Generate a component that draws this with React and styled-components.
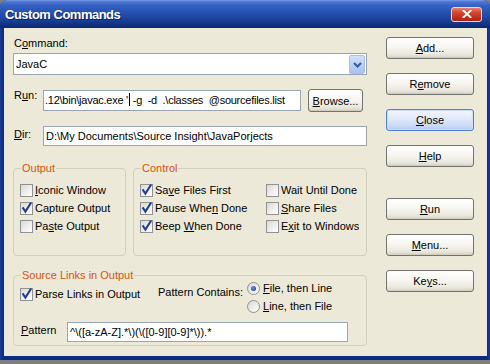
import React from "react";
import styled, { createGlobalStyle } from "styled-components";

const Global = createGlobalStyle`
  html, body { margin: 0; padding: 0; background: #7f7f7f; }
  body { font-family: "Liberation Sans", Arial, sans-serif; font-size: 11px; color: #000; }
  #root { width: 490px; height: 364px; overflow: hidden; }
`;

const Window = styled.div`
  width: 490px;
  height: 360px;
  box-sizing: border-box;
  display: flex;
  flex-direction: column;
  background: linear-gradient(to right, #1a3c9a, #0c2a80 3px, #0c2a80 calc(100% - 3px), #1a3c9a);
  border-radius: 7px 7px 0 0;
  overflow: hidden;
`;

const TitleBar = styled.div`
  height: 28px;
  flex: none;
  display: flex;
  align-items: center;
  padding-left: 5px;
  background: linear-gradient(
    to bottom,
    #7a9ce6 0%,
    #4a74d2 7%,
    #335fc0 22%,
    #2751b0 45%,
    #1b419c 70%,
    #10327f 88%,
    #0b2871 100%
  );
`;

const TitleText = styled.span`
  font-family: "Liberation Sans", Arial, sans-serif;
  font-weight: bold;
  font-size: 13px;
  letter-spacing: -0.5px;
  color: #fff;
  text-shadow: 1px 1px 0 #0a1d66;
`;

const CloseBox = styled.div`
  margin-left: auto;
  margin-right: 8px;
  width: 31px;
  height: 15px;
  box-sizing: border-box;
  border: 1px solid #f2d6d0;
  border-radius: 3px;
  background: linear-gradient(to bottom, #e8806c 0%, #d84a34 30%, #c3301c 70%, #b02412 100%);
  display: flex;
  align-items: center;
  justify-content: center;
`;

const Client = styled.div`
  flex: 1;
  margin: 0 3px 4px 4px;
  background: #ece9d8;
  display: flex;
  gap: 19px;
  padding: 9px 13px 0 9px;
`;

const LeftColumn = styled.div`
  width: 354px;
  flex: none;
  display: flex;
  flex-direction: column;
`;

const FieldLabel = styled.div`
  line-height: 13px;
  padding-left: 1px;
  white-space: nowrap;
`;

const Combo = styled.div`
  margin-top: 3px;
  height: 22px;
  box-sizing: border-box;
  border: 1px solid #98a6b4;
  background: #fff;
  display: flex;
  align-items: center;
  padding-left: 2px;
`;

const DropButton = styled.div`
  margin-left: auto;
  margin-right: 1px;
  margin-top: 1px;
  width: 16px;
  height: 19px;
  box-sizing: border-box;
  border: 1px solid #a9c1ef;
  border-radius: 2px;
  background: linear-gradient(to bottom, #d3e0fb, #bcd0f7 50%, #a9c2f3);
  display: flex;
  align-items: center;
  justify-content: center;
`;

const Row = styled.div`
  display: flex;
  align-items: flex-start;
  margin-top: ${(p) => p.$mt}px;
`;

const RowLabel = styled.div`
  width: ${(p) => p.$w}px;
  flex: none;
  line-height: 13px;
  padding-top: ${(p) => p.$pt || 0}px;
  padding-left: 1px;
  box-sizing: border-box;
  white-space: nowrap;
`;

const TextBox = styled.div`
  width: ${(p) => p.$w}px;
  height: ${(p) => p.$h}px;
  margin-top: ${(p) => p.$mt || 0}px;
  flex: none;
  box-sizing: border-box;
  border: 1px solid #98a6b4;
  background: #fff;
  padding: 0 ${(p) => p.$px || 1}px;
  line-height: ${(p) => p.$h - 2}px;
  letter-spacing: ${(p) => p.$ls || 0}px;
  white-space: pre;
  overflow: hidden;
`;

const Caret = styled.span`
  display: inline-block;
  width: 1px;
  height: 13px;
  margin-left: 1px;
  background: #000;
  vertical-align: -2px;
`;

const Button = styled.button`
  font-family: "Liberation Sans", Arial, sans-serif;
  font-size: 11px;
  color: #000;
  width: ${(p) => p.$w || 88}px;
  height: ${(p) => p.$h || 22}px;
  margin-left: ${(p) => p.$ml || 0}px;
  flex: none;
  padding: 0;
  box-sizing: border-box;
  border: 1px solid ${(p) => (p.$default ? "#4f7fd6" : "#74746f")};
  border-radius: 3px;
  background: ${(p) =>
    p.$default
      ? "linear-gradient(to bottom, #f3f6fe 0%, #e0e9fb 45%, #c9d9f7 80%, #b3c8f1 100%)"
      : "linear-gradient(to bottom, #ffffff 0%, #f7f6f1 45%, #ebe9df 80%, #d6d3c6 100%)"};
  box-shadow: ${(p) =>
    p.$default ? "inset 0 0 0 1px #cddcf8" : "inset 0 -1px 0 #d0cdbf"};
`;

const GroupsRow = styled.div`
  display: flex;
  gap: 7px;
  margin-top: 22px;
`;

const Group = styled.div`
  position: relative;
  width: ${(p) => p.$w}px;
  height: ${(p) => p.$h}px;
  margin-top: ${(p) => p.$mt || 0}px;
  flex: none;
  box-sizing: border-box;
  border: 1px solid #d0d0bf;
  border-radius: 4px;
`;

const Legend = styled.div`
  position: absolute;
  top: -7px;
  left: 7px;
  padding: 0 1px;
  line-height: 13px;
  background: #ece9d8;
  color: #d8540c;
  white-space: nowrap;
`;

const CheckGrid = styled.div`
  display: grid;
  grid-template-rows: repeat(3, 18px);
  grid-template-columns: ${(p) => p.$cols || "auto"};
  grid-auto-flow: column;
  padding: 12px 0 0 6px;
`;

const Item = styled.div`
  display: flex;
  align-items: center;
  gap: ${(p) => p.$gap || 2}px;
  height: 18px;
  white-space: nowrap;
  width: ${(p) => (p.$w ? p.$w + "px" : "auto")};
  margin-top: ${(p) => p.$mt || 0}px;
  flex: none;
`;

const Box = styled.span`
  position: relative;
  width: 13px;
  height: 13px;
  flex: none;
  box-sizing: border-box;
  border: 1px solid #8f9294;
  background: linear-gradient(135deg, #d9d8d1 0%, #eeede8 50%, #ffffff 100%);
`;

const CheckMark = styled.svg`
  position: absolute;
  left: -1px;
  top: -1px;
  overflow: visible;
`;

const Radio = styled.span`
  width: 13px;
  height: 13px;
  flex: none;
  box-sizing: border-box;
  border: 1px solid #8f9294;
  border-radius: 50%;
  background: linear-gradient(135deg, #d6d5ce 0%, #eeede8 50%, #ffffff 100%);
  display: flex;
  align-items: center;
  justify-content: center;
`;

const RadioDot = styled.span`
  width: 5px;
  height: 5px;
  border-radius: 50%;
  background: radial-gradient(circle at 40% 35%, #6d93e4 0%, #2a55b8 60%, #1c3f96 100%);
`;

const SourceTop = styled.div`
  display: flex;
  align-items: flex-start;
  padding: 3px 0 0 6px;
`;

const ContainsLabel = styled.div`
  width: 89px;
  flex: none;
  margin-top: 7px;
  line-height: 13px;
  white-space: nowrap;
`;

const RadioList = styled.div`
  display: grid;
  grid-auto-rows: 18px;
`;

const PatternRow = styled.div`
  display: flex;
  align-items: flex-start;
  margin-top: 7px;
  padding-left: 6px;
`;

const RightColumn = styled.div`
  width: 88px;
  flex: none;
  display: flex;
  flex-direction: column;
`;

const ButtonStack = styled.div`
  display: flex;
  flex-direction: column;
  gap: 14px;
  margin-top: ${(p) => p.$mt || 0}px;
`;

const U = styled.u`
  text-decoration: underline;
  text-underline-offset: 1px;
`;

function Tick() {
  return (
    <CheckMark width="13" height="13" viewBox="0 0 13 13">
      <path
        d="M3.2 6.2 L5.4 9.6 L10.6 1.4"
        fill="none"
        stroke="#1f3d96"
        strokeWidth="2.1"
        strokeLinecap="square"
      />
    </CheckMark>
  );
}

function Check({ checked, children, w, mt }) {
  return (
    <Item $w={w} $mt={mt}>
      <Box>{checked && <Tick />}</Box>
      <span>{children}</span>
    </Item>
  );
}

function RadioOption({ selected, children }) {
  return (
    <Item $gap={3}>
      <Radio>{selected && <RadioDot />}</Radio>
      <span>{children}</span>
    </Item>
  );
}

export default function App() {
  return (
    <>
      <Global />
      <Window>
        <TitleBar>
          <TitleText>Custom Commands</TitleText>
          <CloseBox>
            <svg width="10" height="8" viewBox="0 0 10 8">
              <path d="M1.5 0.8 L8.5 7.2 M8.5 0.8 L1.5 7.2" stroke="#fff" strokeWidth="2" strokeLinecap="square" />
            </svg>
          </CloseBox>
        </TitleBar>
        <Client>
          <LeftColumn>
            <FieldLabel>
              C<U>o</U>mmand:
            </FieldLabel>
            <Combo>
              <span>JavaC</span>
              <DropButton>
                <svg width="9" height="6" viewBox="0 0 9 6">
                  <path d="M1 1 L4.5 4.5 L8 1" fill="none" stroke="#3c5a9a" strokeWidth="2" />
                </svg>
              </DropButton>
            </Combo>

            <Row $mt={14}>
              <RowLabel $w={30}>
                R<U>u</U>n:
              </RowLabel>
              <TextBox $w={258} $h={21} $mt={1} $px={1} $ls={-0.25}>
                {".12\\bin\\javac.exe '"}
                <Caret />
                {" -g  -d  .\\classes  @sourcefiles.list"}
              </TextBox>
              <Button $w={55} $h={23} $ml={7}>
                <U>B</U>rowse...
              </Button>
            </Row>

            <Row $mt={14}>
              <RowLabel $w={30} $pt={2}>
                <U>D</U>ir:
              </RowLabel>
              <TextBox $w={324} $h={20} $px={2}>
                {"D:\\My Documents\\Source Insight\\JavaPorjects"}
              </TextBox>
            </Row>

            <GroupsRow>
              <Group $w={113} $h={88}>
                <Legend>Output</Legend>
                <CheckGrid>
                  <Check>
                    <U>I</U>conic Window
                  </Check>
                  <Check checked>Capture Output</Check>
                  <Check>
                    Pa<U>s</U>te Output
                  </Check>
                </CheckGrid>
              </Group>
              <Group $w={234} $h={88}>
                <Legend>Control</Legend>
                <CheckGrid $cols="126px auto">
                  <Check checked>
                    Sa<U>v</U>e Files First
                  </Check>
                  <Check checked>
                    Pause Whe<U>n</U> Done
                  </Check>
                  <Check checked>
                    Beep <U>W</U>hen Done
                  </Check>
                  <Check>Wait Until Done</Check>
                  <Check>
                    <U>S</U>hare Files
                  </Check>
                  <Check>
                    E<U>x</U>it to Windows
                  </Check>
                </CheckGrid>
              </Group>
            </GroupsRow>

            <Group $w={354} $h={71} $mt={19}>
              <Legend>Source Links in Output</Legend>
              <SourceTop>
                <Check checked w={138} mt={6}>
                  Parse Links in Output
                </Check>
                <ContainsLabel>Pattern Contains:</ContainsLabel>
                <RadioList>
                  <RadioOption selected>
                    <U>F</U>ile, then Line
                  </RadioOption>
                  <RadioOption>
                    <U>L</U>ine, then File
                  </RadioOption>
                </RadioList>
              </SourceTop>
              <PatternRow>
                <RowLabel $w={47} $pt={2}>
                  <U>P</U>attern
                </RowLabel>
                <TextBox $w={281} $h={20} $px={2}>
                  {"^\\([a-zA-Z].*\\)(\\([0-9][0-9]*\\)).*"}
                </TextBox>
              </PatternRow>
            </Group>
          </LeftColumn>

          <RightColumn>
            <ButtonStack>
              <Button>
                <U>A</U>dd...
              </Button>
              <Button>
                R<U>e</U>move
              </Button>
              <Button $default>
                <U>C</U>lose
              </Button>
              <Button>
                <U>H</U>elp
              </Button>
            </ButtonStack>
            <ButtonStack $mt={31}>
              <Button>
                <U>R</U>un
              </Button>
              <Button>
                <U>M</U>enu...
              </Button>
              <Button>
                Ke<U>y</U>s...
              </Button>
            </ButtonStack>
          </RightColumn>
        </Client>
      </Window>
    </>
  );
}
